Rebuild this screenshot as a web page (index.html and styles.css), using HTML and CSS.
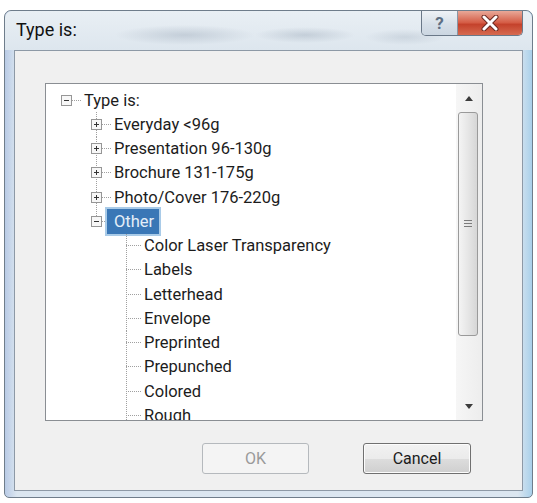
FILE: index.html
```html
<!DOCTYPE html>
<html lang="en">
<head>
    <meta charset="UTF-8">
    <title>Type is:</title>
    <link rel="stylesheet" href="styles.css">
</head>
<body>
    <div class="window">
        <!-- Title bar -->
        <div class="titlebar">
            <span class="title">Type is:</span>
            <div class="caption-buttons">
                <div class="cap-btn help">?</div>
                <div class="cap-btn close">
                    <svg width="20" height="16" viewBox="0 0 20 16">
                        <path d="M4 2 L16 14 M16 2 L4 14" stroke="#6b2a22" stroke-width="5" stroke-linecap="round"/>
                        <path d="M4 2 L16 14 M16 2 L4 14" stroke="#fff" stroke-width="3" stroke-linecap="round"/>
                    </svg>
                </div>
            </div>
        </div>

        <div class="client">
            <!-- Tree list -->
            <div class="listbox">
                <div class="tree">
                    <div class="row">
                        <span class="cell c-root">
                            <svg class="exp" width="11" height="11" viewBox="0 0 11 11"><rect x=".5" y=".5" width="10" height="10" fill="#f7f7f7" stroke="#969696"/><path d="M3 5.5h5" stroke="#333"/></svg>
                        </span>
                        <span class="label">Type is:</span>
                    </div>
                    <div class="row">
                        <span class="cell"></span>
                        <span class="cell c-full">
                            <svg class="exp" width="11" height="11" viewBox="0 0 11 11"><rect x=".5" y=".5" width="10" height="10" fill="#f7f7f7" stroke="#969696"/><path d="M3 5.5h5M5.5 3v5" stroke="#333"/></svg>
                        </span>
                        <span class="label">Everyday &lt;96g</span>
                    </div>
                    <div class="row">
                        <span class="cell"></span>
                        <span class="cell c-full">
                            <svg class="exp" width="11" height="11" viewBox="0 0 11 11"><rect x=".5" y=".5" width="10" height="10" fill="#f7f7f7" stroke="#969696"/><path d="M3 5.5h5M5.5 3v5" stroke="#333"/></svg>
                        </span>
                        <span class="label">Presentation 96-130g</span>
                    </div>
                    <div class="row">
                        <span class="cell"></span>
                        <span class="cell c-full">
                            <svg class="exp" width="11" height="11" viewBox="0 0 11 11"><rect x=".5" y=".5" width="10" height="10" fill="#f7f7f7" stroke="#969696"/><path d="M3 5.5h5M5.5 3v5" stroke="#333"/></svg>
                        </span>
                        <span class="label">Brochure 131-175g</span>
                    </div>
                    <div class="row">
                        <span class="cell"></span>
                        <span class="cell c-full">
                            <svg class="exp" width="11" height="11" viewBox="0 0 11 11"><rect x=".5" y=".5" width="10" height="10" fill="#f7f7f7" stroke="#969696"/><path d="M3 5.5h5M5.5 3v5" stroke="#333"/></svg>
                        </span>
                        <span class="label">Photo/Cover 176-220g</span>
                    </div>
                    <div class="row">
                        <span class="cell"></span>
                        <span class="cell c-top">
                            <svg class="exp" width="11" height="11" viewBox="0 0 11 11"><rect x=".5" y=".5" width="10" height="10" fill="#f7f7f7" stroke="#969696"/><path d="M3 5.5h5" stroke="#333"/></svg>
                        </span>
                        <span class="label selected">Other</span>
                    </div>
                    <div class="row"><span class="cell"></span><span class="cell"></span><span class="cell c-full"></span><span class="label">Color Laser Transparency</span></div>
                    <div class="row"><span class="cell"></span><span class="cell"></span><span class="cell c-full"></span><span class="label">Labels</span></div>
                    <div class="row"><span class="cell"></span><span class="cell"></span><span class="cell c-full"></span><span class="label">Letterhead</span></div>
                    <div class="row"><span class="cell"></span><span class="cell"></span><span class="cell c-full"></span><span class="label">Envelope</span></div>
                    <div class="row"><span class="cell"></span><span class="cell"></span><span class="cell c-full"></span><span class="label">Preprinted</span></div>
                    <div class="row"><span class="cell"></span><span class="cell"></span><span class="cell c-full"></span><span class="label">Prepunched</span></div>
                    <div class="row"><span class="cell"></span><span class="cell"></span><span class="cell c-full"></span><span class="label">Colored</span></div>
                    <div class="row"><span class="cell"></span><span class="cell"></span><span class="cell c-full"></span><span class="label">Rough</span></div>
                </div>
                <!-- Vertical scrollbar -->
                <div class="vscroll">
                    <div class="arrow">
                        <svg width="8" height="5" viewBox="0 0 8 5"><path d="M0 5 L4 0 L8 5Z" fill="#3c3c3c"/></svg>
                    </div>
                    <div class="thumb">
                        <span class="grip"></span>
                    </div>
                    <div class="track"></div>
                    <div class="arrow">
                        <svg width="8" height="5" viewBox="0 0 8 5"><path d="M0 0 L4 5 L8 0Z" fill="#3c3c3c"/></svg>
                    </div>
                </div>
            </div>

            <div class="actions">
                <button class="btn" disabled>OK</button>
                <button class="btn">Cancel</button>
            </div>
        </div>
    </div>
</body>
</html>
```

FILE: styles.css
```css
body {
    margin: 0;
    background-color: #ffffff;
    font-family: Roboto, "Liberation Sans", sans-serif;
    color: #1c1c1c;
}
.window {
    box-sizing: border-box;
    width: 529px;
    height: 488px;
    margin: 10px 0 0 4px;
    padding: 0 9px 6px 9px;
    display: flex;
    flex-direction: column;
    border: 1px solid #6f7d8b;
    border-radius: 7px 7px 5px 5px;
    background:
        linear-gradient(to right, #b9cbe6 0, #dbe6f0 12px, #dbe6f0 calc(100% - 14px), #a9d0ea 100%);
}
.titlebar {
    height: 39px;
    display: flex;
    align-items: flex-start;
    padding-left: 2px;
    background:
        radial-gradient(ellipse 70px 10px at 180px 24px, rgba(140, 155, 172, 0.35), transparent),
        radial-gradient(ellipse 50px 8px at 300px 24px, rgba(140, 155, 172, 0.35), transparent),
        radial-gradient(ellipse 40px 8px at 400px 26px, rgba(140, 155, 172, 0.25), transparent),
        linear-gradient(#e9eff4, #dde6ee);
    margin: 0 -9px;
    padding: 0 9px 0 11px;
    border-radius: 7px 7px 0 0;
}
.title {
    font-size: 18px;
    line-height: 18px;
    margin-top: 10px;
    color: #111;
}
.caption-buttons {
    margin-left: auto;
    display: flex;
    height: 24px;
    border: 1px solid #6a7888;
    border-top: none;
    border-radius: 0 0 5px 5px;
    overflow: hidden;
}
.cap-btn {
    display: flex;
    align-items: center;
    justify-content: center;
}
.help {
    width: 35px;
    border-right: 1px solid #8896a5;
    background: linear-gradient(#eef2f6, #d6dfe8 55%, #cbd6e1);
    font-size: 17px;
    font-weight: bold;
    color: #5d6f84;
}
.close {
    width: 64px;
    background: linear-gradient(#e9a898, #d45a43 50%, #c4412b 55%, #d66a50);
}
.client {
    flex: 1;
    display: flex;
    flex-direction: column;
    padding: 32px 0 0 30px;
    background-color: #f0f0f0;
    border: 1px solid #8d99a6;
}
.listbox {
    width: 438px;
    height: 338px;
    box-sizing: border-box;
    display: flex;
    background: #ffffff;
    border: 1px solid #8a8e93;
}
.tree {
    flex: 1;
    overflow: hidden;
    padding: 4px 0 0 5px;
    font-size: 16.5px;
}
.row {
    display: flex;
    align-items: center;
    height: 24.25px;
    white-space: nowrap;
}
.cell {
    flex: none;
    width: 30px;
    height: 100%;
    display: flex;
    align-items: center;
    justify-content: center;
}
.c-root {
    background:
        repeating-linear-gradient(to right, #a0a0a0 0 1px, transparent 1px 2px) 15px 50% / 15px 1px no-repeat;
}
.c-full {
    background:
        repeating-linear-gradient(to bottom, #a0a0a0 0 1px, transparent 1px 2px) 15px 0 / 1px 100% no-repeat,
        repeating-linear-gradient(to right, #a0a0a0 0 1px, transparent 1px 2px) 15px 50% / 15px 1px no-repeat;
}
.c-top {
    background:
        repeating-linear-gradient(to bottom, #a0a0a0 0 1px, transparent 1px 2px) 15px 0 / 1px 50% no-repeat,
        repeating-linear-gradient(to right, #a0a0a0 0 1px, transparent 1px 2px) 15px 50% / 15px 1px no-repeat;
}
.exp {
    display: block;
}
.label {
    margin-left: -6px;
    padding: 3px 5px 3px 7px;
    border: 2px solid transparent;
    line-height: 19px;
}
.label.selected {
    background-color: #3a77b6;
    border-color: #a9cbe8;
    color: #e4eef8;
}
.vscroll {
    width: 26px;
    display: flex;
    flex-direction: column;
    background: linear-gradient(to right, #f6f6f6, #ededed);
}
.arrow {
    height: 28px;
    display: flex;
    align-items: center;
    justify-content: center;
}
.thumb {
    height: 224px;
    margin: 0 4px 0 2px;
    box-sizing: border-box;
    display: flex;
    align-items: center;
    justify-content: center;
    border: 1px solid #9a9a9a;
    border-radius: 3px;
    background: linear-gradient(to right, #f4f4f4, #e6e6e6 50%, #d6d6d6);
}
.grip {
    width: 8px;
    height: 9px;
    background: repeating-linear-gradient(to bottom, #7c7c7c 0 1px, transparent 1px 3px);
}
.track {
    flex: 1;
}
.actions {
    display: flex;
    justify-content: flex-end;
    gap: 54px;
    margin-top: 22px;
    padding-right: 51px;
}
.btn {
    width: 108px;
    height: 31px;
    font-family: Roboto, "Liberation Sans", sans-serif;
    font-size: 16px;
    color: #1c1c1c;
    border: 1px solid #707070;
    border-radius: 3px;
    background: linear-gradient(#f2f2f2, #ebebeb 50%, #dddddd 51%, #cfcfcf);
    box-shadow: inset 0 0 0 1px #fcfcfc;
}
.btn:disabled {
    width: 107px;
    color: #9a9a9a;
    border-color: #b5b9bd;
    background: #f4f4f4;
    box-shadow: none;
}
```
